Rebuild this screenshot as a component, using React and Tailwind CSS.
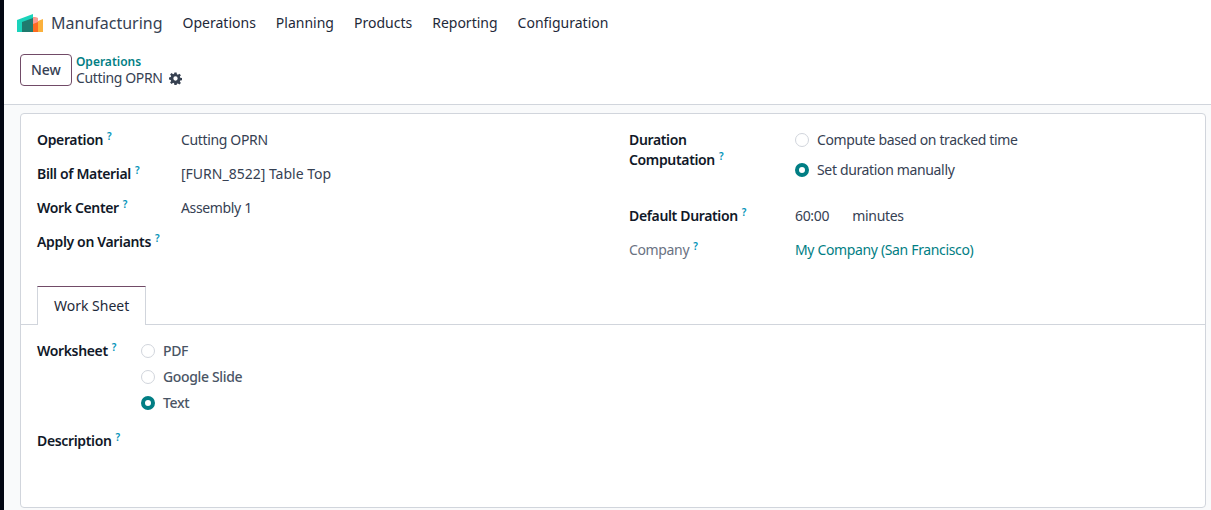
const FONT = "font-['Noto_Sans',sans-serif]";

function Help() {
  return <sup className="ml-1 text-[10px] font-semibold text-cyan-600">?</sup>;
}

function Field({ label, muted, children, wide }) {
  return (
    <div className={`flex h-6 items-center ${wide ? "gap-1.5" : ""}`}>
      <div className={`${wide ? "w-40" : "w-36"} shrink-0 ${muted ? "text-gray-500" : "font-semibold text-gray-900"}`}>
        {label}
        <Help />
      </div>
      <div className="text-gray-700">{children}</div>
    </div>
  );
}

function Radio({ on, label, medium }) {
  return (
    <div className="flex items-center gap-2">
      {on ? (
        <span className="size-3.5 rounded-full border-4 border-[#017e84] bg-white" />
      ) : (
        <span className="size-3.5 rounded-full border border-gray-300 bg-white" />
      )}
      <span className={medium ? "font-medium text-gray-600" : "text-gray-700"}>{label}</span>
    </div>
  );
}

function Logo() {
  return (
    <svg width="26" height="18" viewBox="0 0 26 18">
      <path d="M0 6 L16 0 V18 H0 Z" fill="#1ad3bb" />
      <path d="M5 8 L16 4 V18 H5 Z" fill="#1f7a6e" />
      <path d="M16 3 L21 4 V18 H16 Z" fill="#fb6b21" />
      <path d="M16 3 L21 4 V8 L16 10 Z" fill="#fb9a94" />
      <path d="M21 7 L26 5 V18 H21 Z" fill="#fbb13c" />
    </svg>
  );
}

export default function App() {
  return (
    <div className={`flex h-[510px] overflow-hidden bg-white text-sm ${FONT}`}>
      <div className="w-1 shrink-0 bg-gray-950" />
      <div className="flex min-w-0 flex-1 flex-col">
        <header className="border-b border-gray-300 bg-white">
          <nav className="flex h-11 items-center gap-5 pl-3.25 pt-0.5 text-gray-800">
            <div className="flex items-center gap-2 text-base text-gray-700">
              <Logo />
              <span>Manufacturing</span>
            </div>
            <span>Operations</span>
            <span>Planning</span>
            <span>Products</span>
            <span>Reporting</span>
            <span>Configuration</span>
          </nav>
          <div className="flex h-[60px] items-start gap-1 pl-4 pt-2.5">
            <button className="h-8 rounded border border-[#714b67] px-2.5 font-medium text-gray-700">New</button>
            <div className="leading-4">
              <div className="text-xs font-semibold text-[#017e84]">Operations</div>
              <div className="flex items-center gap-1.5 tracking-tight text-gray-700">
                Cutting OPRN
                <svg width="13" height="13" viewBox="0 0 24 24" fill="#374151">
                  <path fillRule="evenodd" d="M10 1h4l.6 3.2 1.9.8L19.2 3l2.8 2.8-2 2.7.8 1.9L24 11v4l-3.2.6-.8 1.9 2 2.7-2.8 2.8-2.7-2-1.9.8L14 24h-4l-.6-3.2-1.9-.8-2.7 2L2 19.2l2-2.7-.8-1.9L0 14v-4l3.2-.6.8-1.9-2-2.7L4.8 2l2.7 2 1.9-.8zM12 8a4 4 0 100 8 4 4 0 000-8z" />
                </svg>
              </div>
            </div>
          </div>
        </header>
        <main className="flex-1 bg-gray-50 pb-0.5 pl-4 pr-1.25 pt-2 tracking-tight">
          <div className="flex h-full flex-col rounded border border-gray-300 bg-white">
            <div className="grid grid-cols-2 px-4 pt-3.5">
              <div className="flex flex-col gap-2.5">
                <Field label="Operation">Cutting OPRN</Field>
                <Field label="Bill of Material">
                  <span className="tracking-normal">[FURN_8522] Table Top</span>
                </Field>
                <Field label="Work Center">Assembly 1</Field>
                <Field label="Apply on Variants" />
              </div>
              <div className="flex flex-col pl-4 pt-0.5">
                <div className="flex gap-1.5">
                  <div className="w-40 shrink-0 font-semibold leading-5 text-gray-900">
                    Duration
                    <br />
                    Computation
                    <Help />
                  </div>
                  <div className="flex flex-col gap-2.5 leading-5">
                    <Radio label="Compute based on tracked time" />
                    <Radio on label="Set duration manually" />
                  </div>
                </div>
                <div className="mt-6 flex flex-col gap-2.5">
                  <Field label="Default Duration" wide>
                    <span className="mr-5">60:00</span> minutes
                  </Field>
                  <Field label="Company" muted wide>
                    <span className="text-[#017e84]">My Company (San Francisco)</span>
                  </Field>
                </div>
              </div>
            </div>
            <div className="mt-6 flex h-9.75 items-end border-b border-gray-300 px-4">
              <div className="-mb-px flex h-9.75 items-center border border-b-0 border-gray-300 border-t-[#714b67] bg-white px-4 tracking-normal text-gray-800">
                Work Sheet
              </div>
            </div>
            <div className="flex px-4 pt-4">
              <div className="w-26 shrink-0 font-semibold text-gray-900">
                Worksheet
                <Help />
              </div>
              <div className="flex flex-col gap-1.5">
                <Radio medium label="PDF" />
                <Radio medium label="Google Slide" />
                <Radio medium on label="Text" />
              </div>
            </div>
            <div className="px-4 pt-4.5 font-semibold text-gray-900">
              Description
              <Help />
            </div>
          </div>
        </main>
      </div>
    </div>
  );
}
